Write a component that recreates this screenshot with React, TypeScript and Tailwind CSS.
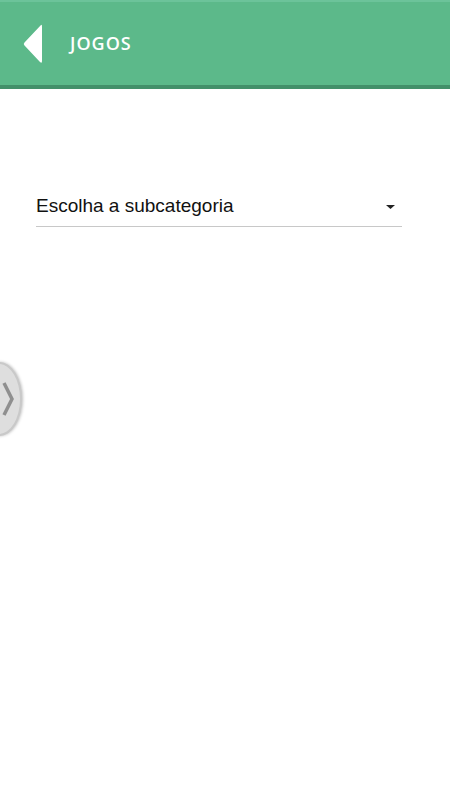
export default function App() {
  return (
    <div className="relative w-[450px] h-[800px] bg-white overflow-hidden" style={{ fontFamily: '"Liberation Sans", Arial, sans-serif' }}>
      {/* ── Header ── */}
      <div className="h-[85px] bg-[#5cb98a] border-t-2 border-[#6cc39a] flex items-center">
        <button className="ml-[23px] w-[19px] h-[40px] flex items-center">
          <svg width="19" height="40" viewBox="0 0 19 40">
            <path d="M18 1 Q19 0 19 3 L19 37 Q19 40 17 38 L1.5 21.5 Q0 20 1.5 18.5 Z" fill="white" />
          </svg>
        </button>
        <h1 className="ml-[28px] text-[18px] font-semibold text-white tracking-[1px]" style={{ fontFamily: '"Open Sans", sans-serif' }}>
          JOGOS
        </h1>
      </div>
      <div className="h-[4px] bg-[#43906a]" />

      {/* ── Subcategory select ── */}
      <div className="mt-[100px] mx-[36px] w-[366px] border-b border-[#c8c8c8] flex items-center justify-between h-[38px]">
        <span className="text-[19px] text-[#111] -mt-[2px]">Escolha a subcategoria</span>
        <svg width="9" height="4" viewBox="0 0 9 4" className="mr-[7px] -mt-[2px]">
          <path d="M0 0 H9 L4.5 4 Z" fill="#222" />
        </svg>
      </div>

      {/* ── Side handle ── */}
      <div className="absolute left-[-24px] top-[362px] w-[46px] h-[74px] rounded-[50%] bg-[#dedede] border-2 border-[#c9c9c9] shadow-[1px_0_3px_rgba(0,0,0,0.25)] flex items-center justify-end pr-[6px]">
        <svg width="12" height="36" viewBox="0 0 12 36">
          <path d="M2 2 L10 18 L2 34" stroke="#8f8f8f" strokeWidth="3.5" fill="none" />
        </svg>
      </div>
    </div>
  )
}
